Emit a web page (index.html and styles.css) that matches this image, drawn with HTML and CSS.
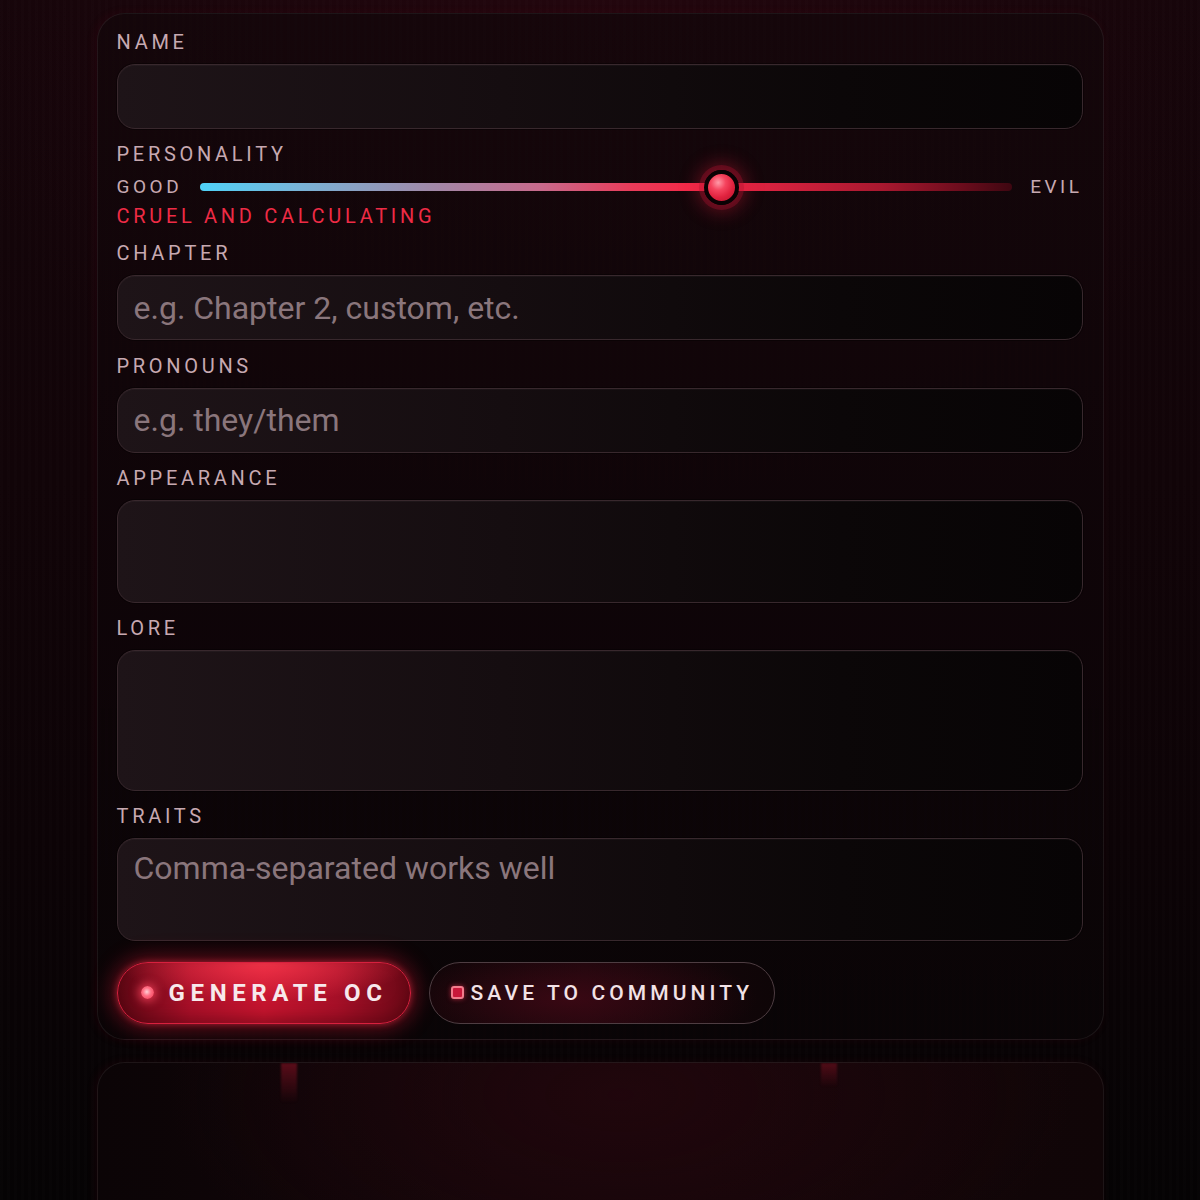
FILE: index.html
```html
<!DOCTYPE html>
<html lang="en">
<head>
<meta charset="utf-8">
<title>OC Generator</title>
<link rel="stylesheet" href="styles.css">
</head>
<body>
<div class="page">
  <section class="card form-card">
    <div class="field">
      <label class="label" for="name">NAME</label>
      <input class="input" id="name" type="text">
    </div>
    <div class="field personality">
      <div class="label">PERSONALITY</div>
      <div class="slider-row">
        <span class="end">GOOD</span>
        <div class="track"><span class="thumb" style="left:64.2%"></span></div>
        <span class="end">EVIL</span>
      </div>
      <div class="desc">CRUEL AND CALCULATING</div>
    </div>
    <div class="field">
      <label class="label" for="chapter">CHAPTER</label>
      <input class="input" id="chapter" type="text" placeholder="e.g. Chapter 2, custom, etc.">
    </div>
    <div class="field">
      <label class="label" for="pronouns">PRONOUNS</label>
      <input class="input" id="pronouns" type="text" placeholder="e.g. they/them">
    </div>
    <div class="field">
      <label class="label" for="appearance">APPEARANCE</label>
      <textarea class="input area area-md" id="appearance"></textarea>
    </div>
    <div class="field">
      <label class="label" for="lore">LORE</label>
      <textarea class="input area area-lg" id="lore"></textarea>
    </div>
    <div class="field">
      <label class="label" for="traits">TRAITS</label>
      <textarea class="input area area-md" id="traits" placeholder="Comma-separated works well"></textarea>
    </div>
    <div class="actions">
      <button class="btn btn-primary"><span class="dot"></span>GENERATE OC</button>
      <button class="btn btn-secondary"><span class="sq"></span>SAVE TO COMMUNITY</button>
    </div>
  </section>
  <section class="card result-card">
    <span class="drip drip-a"></span>
    <span class="drip drip-b"></span>
  </section>
</div>
</body>
</html>
```
FILE: styles.css
```css
* { box-sizing: border-box; }

html, body {
  margin: 0;
  height: 100%;
}

body {
  font-family: Roboto, "Liberation Sans", sans-serif;
  color: #c7a9b1;
  background:
    repeating-linear-gradient(90deg, rgba(255,255,255,0.006) 0 3px, rgba(0,0,0,0) 3px 7px),
    radial-gradient(ellipse 80% 60% at 50% 0%, rgba(60,8,20,0.35), rgba(0,0,0,0) 70%),
    linear-gradient(180deg, #15050a 0%, #110408 40%, #0c0306 70%, #050304 100%);
  overflow: hidden;
}

.page {
  width: 1007px;
  margin: 0 auto;
  padding-top: 13px;
  display: flex;
  flex-direction: column;
  gap: 22px;
}

.card {
  position: relative;
  border: 1px solid rgba(255, 235, 240, 0.075);
  border-radius: 28px;
  background: linear-gradient(180deg, rgba(20,7,11,0.85) 0%, rgba(14,5,8,0.85) 60%, rgba(10,5,7,0.9) 100%);
  box-shadow: -2px 0 10px rgba(120, 10, 30, 0.12);
}

.form-card {
  padding: 16px 20px 15px 19px;
  display: flex;
  flex-direction: column;
  gap: 13.2px;
}

.field {
  display: flex;
  flex-direction: column;
  gap: 10px;
}

.label, .end, .desc {
  font-size: 20px;
  line-height: 24px;
  letter-spacing: 0.185em;
  font-weight: 400;
  color: #c7a9b1;
}

.input {
  width: 100%;
  height: 65px;
  border: 1.5px solid #38282d;
  border-radius: 18px;
  background: linear-gradient(90deg, #1e1418 0%, #150d10 40%, #0b0708 75%, #070405 100%);
  box-shadow: inset 0 1px 0 rgba(255,255,255,0.03), 0 0 0 1px rgba(0,0,0,0.35);
  padding: 0 16px;
  font-family: Roboto, "Liberation Sans", sans-serif;
  font-size: 32px;
  color: #e6d6da;
  outline: none;
}

.input::placeholder {
  color: #8a767c;
  opacity: 1;
}

.area {
  resize: none;
  padding: 11px 16px;
  line-height: 37px;
  display: block;
}

.area-md { height: 103px; }
.area-lg { height: 141px; }

.personality .slider-row {
  display: flex;
  align-items: center;
  gap: 18px;
  height: 22px;
}

.personality .end {
  font-size: 19px;
  letter-spacing: 0.185em;
}

.personality .desc {
  margin-top: -4px;
  color: #ee2b45;
}

.track {
  position: relative;
  flex: 1;
  height: 8px;
  border-radius: 4px;
  background: linear-gradient(90deg, #4fd2f8 0%, #78b4d8 12%, #a08aaa 28%, #c86a8c 42%, #e83c5a 53%, #f12a48 60%, #d8223f 70%, #a8182f 84%, #6a0c1c 94%, #3e0711 100%);
}

.thumb {
  position: absolute;
  top: 50%;
  width: 35px;
  height: 35px;
  margin: -17.5px 0 0 -17.5px;
  border-radius: 50%;
  border: 4px solid #0a0204;
  background: radial-gradient(circle at 38% 32%, #ff9aa8 0%, #f5445e 30%, #e0223e 60%, #b0132b 100%);
  box-shadow: 0 0 0 5px rgba(170, 18, 45, 0.35), 0 0 18px 7px rgba(230, 30, 60, 0.35);
}

.actions {
  margin-top: 7.5px;
  display: flex;
  gap: 18px;
}

.btn {
  height: 62px;
  border-radius: 31px;
  display: flex;
  align-items: center;
  font-family: Roboto, "Liberation Sans", sans-serif;
  cursor: pointer;
}

.btn-primary {
  width: 294px;
  padding: 0 0 0 23px;
  gap: 15px;
  border: 1.5px solid #d8203e;
  background:
    radial-gradient(ellipse 50% 65% at 50% 0%, rgba(255,60,80,0.75), rgba(255,60,80,0) 100%),
    linear-gradient(90deg, #5e0714 0%, #a80f28 25%, #c4142e 50%, #a50f27 75%, #6a0816 100%);
  box-shadow: 0 0 22px 4px rgba(230, 25, 55, 0.45), 0 0 6px rgba(255, 60, 80, 0.5), inset 0 -6px 12px rgba(60, 0, 10, 0.35);
  color: #f7e9ec;
  font-size: 24px;
  font-weight: 700;
  letter-spacing: 0.235em;
}

.dot {
  width: 13px;
  height: 13px;
  flex: none;
  border-radius: 50%;
  background: radial-gradient(circle at 45% 45%, #ffd0d6 0%, #ff7085 40%, #f0334e 100%);
  box-shadow: 0 0 8px 3px rgba(255, 70, 95, 0.7);
}

.btn-secondary {
  width: 346px;
  padding: 0 0 0 21px;
  gap: 7px;
  border: 1.5px solid #4e3d42;
  background:
    radial-gradient(ellipse 55% 90% at 40% 60%, rgba(70,8,22,0.7), rgba(70,8,22,0) 100%),
    linear-gradient(90deg, #0d0507 0%, #1a070c 45%, #0e0507 100%);
  color: #f2e2e6;
  font-size: 21px;
  font-weight: 500;
  letter-spacing: 0.195em;
}

.sq {
  width: 13px;
  height: 13px;
  flex: none;
  border-radius: 3px;
  border: 2px solid #f07c8c;
  background: #c8183a;
  box-shadow: 0 0 5px rgba(255, 60, 90, 0.6);
}

.result-card {
  height: 320px;
  overflow: hidden;
  background:
    radial-gradient(ellipse 45% 70% at 52% 10%, rgba(40,6,14,0.6), rgba(0,0,0,0) 100%),
    linear-gradient(90deg, #0b0406 0%, #130609 40%, #140609 60%, #100507 100%);
}

.drip {
  position: absolute;
  top: 0;
  width: 16px;
  height: 40px;
  background: linear-gradient(180deg, rgba(150, 20, 40, 0.55), rgba(150, 20, 40, 0));
  filter: blur(1px);
}

.drip-a { left: 183px; }
.drip-b { left: 723px; height: 24px; background: linear-gradient(180deg, rgba(150, 20, 40, 0.45), rgba(150, 20, 40, 0)); }
```
